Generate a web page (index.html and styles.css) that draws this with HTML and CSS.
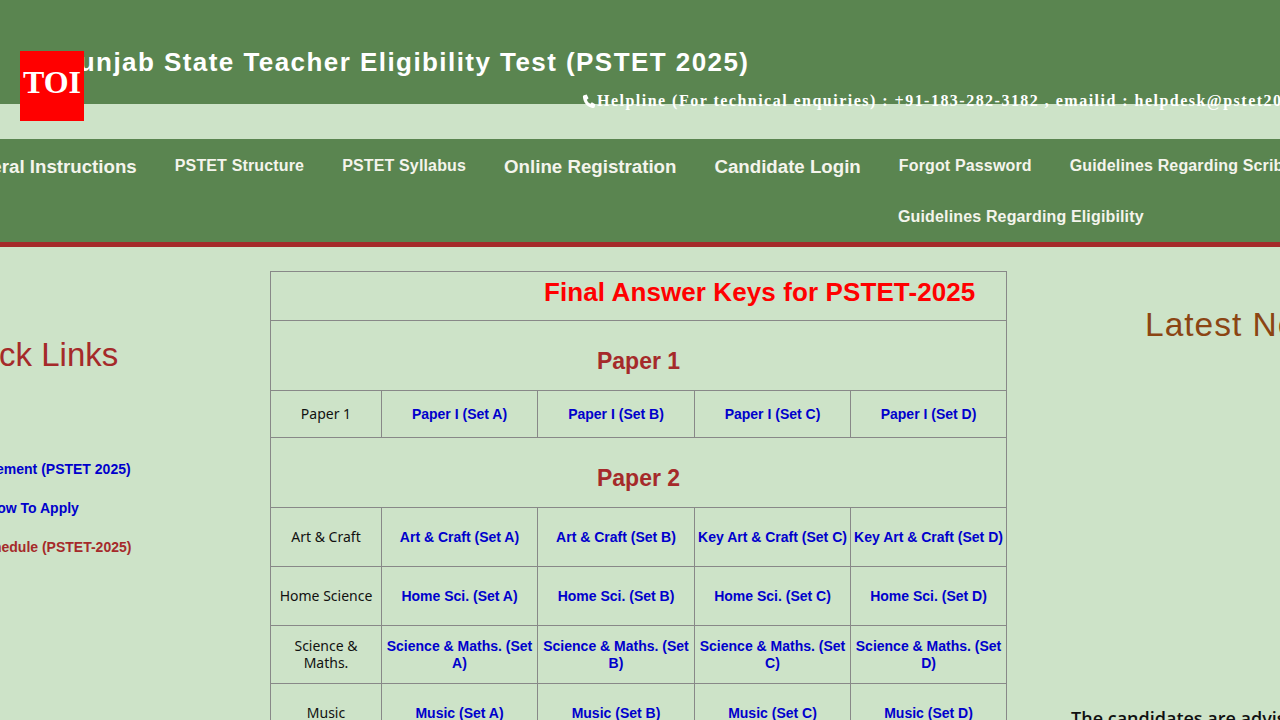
FILE: index.html
```html
<!DOCTYPE html>
<html lang="en">
<head>
    <meta charset="UTF-8">
    <meta name="viewport" content="width=device-width, initial-scale=1.0">
    <title>PSTET 2025</title>
    <link rel="stylesheet" href="styles.css">
</head>
<body>
    <div class="toi">TOI</div>

    <header class="header">
        <h1>Punjab State Teacher Eligibility Test (PSTET 2025)</h1>
        <p class="helpline">
            <svg viewBox="0 0 16 16" width="15" height="15"><path fill="#fff" d="M2 1.200 5 .6l2 4-1.800 1.500c.6 2 1.800 3.400 3.700 4.300l1.600-1.600 3.700 2.100-.7 3.100c-.3.8-1.500 1-2.600.8C5.600 14 1.500 9.200 1 3.300c-.1-1 .3-1.800 1-2.100z"/></svg>Helpline (For technical enquiries) : +91-183-282-3182 , emailid : helpdesk@pstet2025.org
        </p>
    </header>

    <nav class="nav">
        <div class="nav-row first">
            <a class="big" href="#">General Instructions</a>
            <a href="#">PSTET Structure</a>
            <a href="#">PSTET Syllabus</a>
            <a class="big" href="#">Online Registration</a>
            <a class="big" href="#">Candidate Login</a>
            <a href="#">Forgot Password</a>
            <a href="#">Guidelines Regarding Scribe</a>
        </div>
        <div class="nav-row second">
            <a href="#">Guidelines Regarding Eligibility</a>
        </div>
    </nav>

    <main class="main">
        <aside class="quick">
            <h2>Quick Links</h2>
            <ul>
                <li><a href="#">Announcement (PSTET 2025)</a></li>
                <li><a href="#">How To Apply</a></li>
                <li><a class="visited" href="#">Exam Schedule (PSTET-2025)</a></li>
            </ul>
        </aside>

        <table class="keys">
            <colgroup>
                <col class="c1"><col class="c2"><col class="c3"><col class="c4"><col class="c5">
            </colgroup>
            <tr class="r-title"><td colspan="5" class="final">Final Answer Keys for PSTET-2025</td></tr>
            <tr class="r-paper"><td colspan="5" class="paper">Paper 1</td></tr>
            <tr class="r-one">
                <td class="sub">Paper 1</td>
                <td><a href="#">Paper I (Set A)</a></td>
                <td><a href="#">Paper I (Set B)</a></td>
                <td><a href="#">Paper I (Set C)</a></td>
                <td><a href="#">Paper I (Set D)</a></td>
            </tr>
            <tr class="r-paper"><td colspan="5" class="paper">Paper 2</td></tr>
            <tr class="r-two">
                <td class="sub">Art &amp; Craft</td>
                <td><a href="#">Art &amp; Craft (Set A)</a></td>
                <td><a href="#">Art &amp; Craft (Set B)</a></td>
                <td><a href="#">Key Art &amp; Craft (Set C)</a></td>
                <td><a href="#">Key Art &amp; Craft (Set D)</a></td>
            </tr>
            <tr class="r-two">
                <td class="sub">Home Science</td>
                <td><a href="#">Home Sci. (Set A)</a></td>
                <td><a href="#">Home Sci. (Set B)</a></td>
                <td><a href="#">Home Sci. (Set C)</a></td>
                <td><a href="#">Home Sci. (Set D)</a></td>
            </tr>
            <tr class="r-two short">
                <td class="sub">Science &amp; Maths.</td>
                <td><a href="#">Science &amp; Maths. (Set A)</a></td>
                <td><a href="#">Science &amp; Maths. (Set B)</a></td>
                <td><a href="#">Science &amp; Maths. (Set C)</a></td>
                <td><a href="#">Science &amp; Maths. (Set D)</a></td>
            </tr>
            <tr class="r-two">
                <td class="sub">Music</td>
                <td><a href="#">Music (Set A)</a></td>
                <td><a href="#">Music (Set B)</a></td>
                <td><a href="#">Music (Set C)</a></td>
                <td><a href="#">Music (Set D)</a></td>
            </tr>
        </table>

        <aside class="latest">
            <h2>Latest News</h2>
            <p>The candidates are advised to check the website regularly</p>
        </aside>
    </main>
</body>
</html>
```

FILE: styles.css
```css
* {
    margin: 0;
    padding: 0;
    box-sizing: border-box;
}

html, body {
    height: 720px;
    overflow: hidden;
}

body {
    background: #cde3c8;
    font-family: "Liberation Sans", Arial, sans-serif;
    position: relative;
}

a {
    text-decoration: none;
}

/* Badge */
.toi {
    position: absolute;
    top: 51px;
    left: 20px;
    width: 64px;
    height: 70px;
    background: #ff0000;
    color: #fff;
    font-family: "Liberation Serif", serif;
    font-size: 32px;
    font-weight: bold;
    line-height: 63px;
    text-align: center;
    z-index: 5;
}

/* Header */
.header {
    height: 104px;
    background: #5a8550;
    padding-top: 47px;
    padding-left: 60px;
    white-space: nowrap;
}

.header h1 {
    color: #fff;
    font-size: 26px;
    font-weight: bold;
    line-height: 30px;
    letter-spacing: 1.44px;
}

.helpline {
    display: flex;
    align-items: center;
    margin-top: 15px;
    margin-left: 522px;
    color: #fff;
    font-family: "Liberation Serif", serif;
    font-size: 16px;
    font-weight: bold;
    line-height: 18px;
    letter-spacing: 1.48px;
}

.helpline svg {
    flex: none;
}

/* Menu */
.nav {
    margin-top: 35px;
    height: 108px;
    background: #5a8550;
    border-bottom: 5px solid #a52a2a;
    white-space: nowrap;
}

.nav a {
    color: #f4f4ec;
    font-size: 16px;
    font-weight: bold;
    letter-spacing: .15px;
}

.nav a.big {
    font-size: 18.700px;
    letter-spacing: 0;
    position: relative;
    top: 1px;
}

.nav-row {
    display: flex;
    gap: 38px;
    height: 51px;
    align-items: center;
}

.nav-row.first {
    margin-left: -45px;
    padding-top: 3px;
}

.nav-row.second {
    margin-left: 898px;
    padding-top: 3px;
}

/* Three columns */
.main {
    display: flex;
    align-items: flex-start;
    margin-left: -100px;
    padding-top: 24px;
}

.quick {
    width: 266px;
    flex: none;
    margin-right: 104px;
    padding-top: 66px;
    text-align: center;
}

.quick h2 {
    color: #a52a2a;
    font-size: 33px;
    font-weight: normal;
    line-height: 36px;
}

.quick ul {
    list-style: none;
    margin-top: 87px;
}

.quick li {
    height: 39px;
}

.quick a {
    color: #0000cc;
    font-size: 14px;
    font-weight: bold;
}

.quick a.visited {
    color: #a52a2a;
}

/* Answer key table */
.keys {
    width: 737px;
    flex: none;
    table-layout: fixed;
    border-collapse: collapse;
    text-align: center;
}

.keys td {
    border: 1px solid #888;
    padding: 2px;
    font-size: 14px;
    line-height: 17px;
}

.keys td a {
    color: #0000cc;
    font-weight: bold;
}

.c1 { width: 111px; }
.c2 { width: 156px; }
.c3 { width: 157px; }
.c4 { width: 156px; }
.c5 { width: 156px; }

.r-title { height: 49px; }
.r-paper { height: 70px; }
.r-one { height: 47px; }
.r-two { height: 59px; }
.r-two.short { height: 58px; }

.keys td.final {
    color: #ff0000;
    font-size: 26px;
    font-weight: bold;
    line-height: 30px;
    letter-spacing: .1px;
    text-align: left;
    padding-left: 273px;
    padding-bottom: 10px;
}

.keys td.paper {
    color: #a52a2a;
    font-size: 23px;
    font-weight: bold;
    line-height: 28px;
    padding-top: 13px;
}

.keys td.sub {
    color: #111;
    font-family: "Noto Sans", "Open Sans", sans-serif;
    padding-bottom: 4px;
}

/* Right column */
.latest {
    width: 400px;
    flex: none;
    margin-left: 64px;
    white-space: nowrap;
}

.latest h2 {
    margin-top: 32px;
    margin-left: 74px;
    color: #8b4513;
    font-size: 33.500px;
    font-weight: normal;
    line-height: 44px;
    letter-spacing: 1px;
}

.latest p {
    margin-top: 359px;
    color: #111;
    font-family: "Open Sans", sans-serif;
    font-size: 18px;
    font-weight: 600;
}
```
